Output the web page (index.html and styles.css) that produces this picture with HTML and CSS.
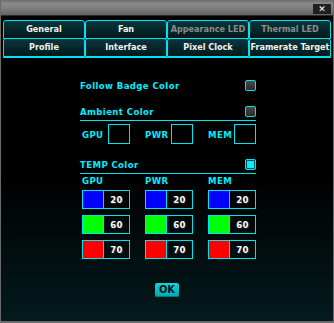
FILE: index.html
```html
<!DOCTYPE html>
<html lang="en">
<head>
    <meta charset="UTF-8">
    <meta name="viewport" content="width=device-width, initial-scale=1.0">
    <title>LED Settings</title>
    <link rel="stylesheet" href="styles.css">
</head>
<body>
    <div class="window">
        <div class="titlebar">
            <span class="close">&#10005;</span>
        </div>

        <div class="tabs">
            <div class="tab">General</div>
            <div class="tab">Fan</div>
            <div class="tab disabled">Appearance LED</div>
            <div class="tab disabled">Thermal LED</div>
            <div class="tab">Profile</div>
            <div class="tab">Interface</div>
            <div class="tab">Pixel Clock</div>
            <div class="tab">Framerate Target</div>
        </div>

        <div class="panel">
            <div class="form">
                <div class="option">
                    <span>Follow Badge Color</span>
                    <span class="check"></span>
                </div>
                <div class="option section">
                    <span>Ambient Color</span>
                    <span class="check"></span>
                </div>
                <div class="grid ambient">
                    <div class="cell"><span>GPU</span><span class="box"></span></div>
                    <div class="cell"><span>PWR</span><span class="box"></span></div>
                    <div class="cell"><span>MEM</span><span class="box"></span></div>
                </div>

                <div class="option section temp">
                    <span>TEMP Color</span>
                    <span class="check on"></span>
                </div>
                <div class="grid labels">
                    <span>GPU</span>
                    <span>PWR</span>
                    <span>MEM</span>
                </div>
                <div class="grid levels">
                    <div class="level"><span class="swatch blue"></span><span class="value">20</span></div>
                    <div class="level"><span class="swatch blue"></span><span class="value">20</span></div>
                    <div class="level"><span class="swatch blue"></span><span class="value">20</span></div>
                    <div class="level"><span class="swatch green"></span><span class="value">60</span></div>
                    <div class="level"><span class="swatch green"></span><span class="value">60</span></div>
                    <div class="level"><span class="swatch green"></span><span class="value">60</span></div>
                    <div class="level"><span class="swatch red"></span><span class="value">70</span></div>
                    <div class="level"><span class="swatch red"></span><span class="value">70</span></div>
                    <div class="level"><span class="swatch red"></span><span class="value">70</span></div>
                </div>
            </div>

            <div class="actions">
                <button class="ok">OK</button>
            </div>
        </div>
    </div>
</body>
</html>
```

FILE: styles.css
```css
body {
    margin: 0;
    background: #000;
    font-family: "DejaVu Sans Condensed", "DejaVu Sans", sans-serif;
    font-weight: bold;
    font-size: 9.5px;
}
.window {
    width: 334px;
    height: 323px;
    box-sizing: border-box;
    border: 1px solid #6a6a6a;
    border-top: none;
    border-bottom-width: 2px;
    background: linear-gradient(#000 0%, #000 55%, #031a1d 100%);
    overflow: hidden;
}
.titlebar {
    height: 15px;
    margin: 0 -1px;
    background: linear-gradient(#6c6c6c, #8a8a8a 25%, #7c7c7c 60%, #626262);
    border-bottom: 1px solid #2c2c2c;
    display: flex;
    justify-content: flex-end;
    align-items: flex-start;
}
.close {
    width: 18px;
    height: 10px;
    margin: 4px 3px 0 0;
    background: #202020;
    color: #fff;
    font-family: "DejaVu Sans", sans-serif;
    font-size: 9px;
    line-height: 10px;
    text-align: center;
}
.tabs {
    display: grid;
    grid-template-columns: repeat(4, 82px);
    margin: 4px 2px 0;
}
.tab {
    height: 17px;
    border: 1px solid #00e4f0;
    border-radius: 3px 3px 0 0;
    background: linear-gradient(#0a363c, #02191c);
    color: #f2f2f2;
    font-size: 9px;
    line-height: 17px;
    text-align: center;
    white-space: nowrap;
}
.tab:nth-child(n+5) {
    margin-top: -1px;
}
.tab.disabled {
    color: #8c8c8c;
}
.panel {
    margin: 0 2px;
    border-top: 1px solid #00e4f0;
    padding-top: 22px;
}
.form {
    width: 176px;
    margin-left: 77px;
    color: #00eeff;
    letter-spacing: 0.4px;
}
.option {
    display: flex;
    justify-content: space-between;
    align-items: center;
    height: 11px;
}
.option.section {
    margin-top: 15px;
    padding-bottom: 3px;
    border-bottom: 1px solid #00e4f0;
}
.option.temp {
    margin-top: 15px;
}
.check {
    width: 9px;
    height: 9px;
    border: 1px solid #00e4f0;
    border-radius: 2px;
    background: linear-gradient(#4a4a4a, #2a2a2a);
}
.check.on {
    background: #00f0ff;
    box-shadow: inset 0 0 0 1px #004a50;
}
.grid {
    display: grid;
    grid-template-columns: repeat(3, 48px);
    column-gap: 15px;
    padding-left: 2px;
}
.ambient {
    margin-top: 3px;
}
.cell {
    display: flex;
    justify-content: space-between;
    align-items: center;
}
.box {
    width: 20px;
    height: 18px;
    border: 1px solid #00e4f0;
}
.labels {
    margin-top: 2px;
    line-height: 10px;
}
.levels {
    margin-top: 4px;
    row-gap: 6px;
}
.level {
    display: flex;
    height: 17px;
    border: 1px solid #00e4f0;
}
.swatch {
    width: 20px;
    border-right: 1px solid #00e4f0;
}
.swatch.blue {
    background: #0000ff;
}
.swatch.green {
    background: #00ff00;
}
.swatch.red {
    background: #ff0000;
}
.value {
    flex: 1;
    color: #fff;
    text-align: center;
    line-height: 17px;
    text-shadow: 1px 1px 0 #222;
}
.actions {
    display: flex;
    justify-content: center;
    margin-top: 24px;
}
.ok {
    width: 24px;
    height: 14px;
    padding: 0;
    border: none;
    border-radius: 2px;
    background: linear-gradient(#1ed0d8, #00a8b0);
    box-shadow: inset 0 -1px 0 #007880;
    color: #02161a;
    font-family: "DejaVu Sans Condensed", sans-serif;
    font-weight: bold;
    font-size: 11px;
    line-height: 14px;
}
```
